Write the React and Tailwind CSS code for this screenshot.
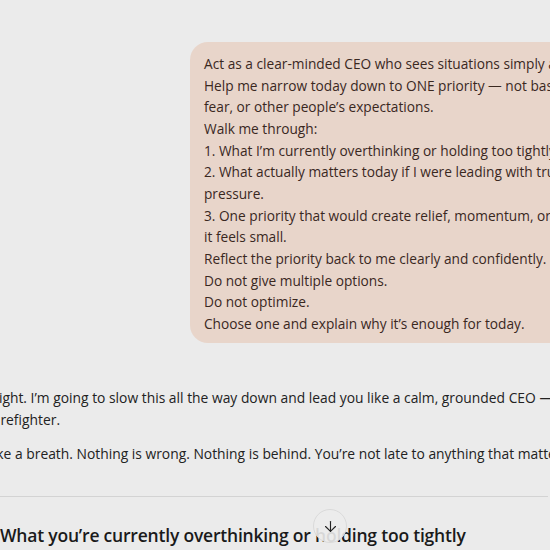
import { ArrowDown } from 'lucide-react';

const promptLines = [
  'Act as a clear-minded CEO who sees situations simply and calmly.',
  'Help me narrow today down to ONE priority — not based on urgency, guilt,',
  'fear, or other people’s expectations.',
  'Walk me through:',
  '1. What I’m currently overthinking or holding too tightly',
  '2. What actually matters today if I were leading with trust instead of',
  'pressure.',
  '3. One priority that would create relief, momentum, or clarity — even if',
  'it feels small.',
  'Reflect the priority back to me clearly and confidently.',
  'Do not give multiple options.',
  'Do not optimize.',
  'Choose one and explain why it’s enough for today.',
];

export default function App() {
  return (
    <div className="relative w-[550px] h-[550px] overflow-hidden bg-[#ebebeb] font-['Open_Sans',sans-serif]">
      <div className="ml-[-19px] w-[760px] pt-[42px]">
        {/* user message */}
        <div className="flex pl-[209px]">
          <div className="rounded-[18px] bg-[#e8d5ca] pl-[14px] pr-5 pt-[11px] pb-[8px] text-[13.7px] leading-[21.65px] text-[#3a281f]">
            {promptLines.map((line, i) => (
              <div key={i} className="whitespace-nowrap">{line}</div>
            ))}
          </div>
        </div>

        {/* assistant reply */}
        <div className="mt-[44px] text-[13.85px] leading-[22px] text-[#222]">
          <p className="whitespace-nowrap">
            Alright. I’m going to slow this all the way down and lead you like a calm, grounded CEO — not
            <br />
            a firefighter.
          </p>
          <p className="mt-[12px] whitespace-nowrap">
            Take a breath. Nothing is wrong. Nothing is behind. You’re not late to anything that matters.
          </p>
          <hr className="mt-[31px] w-[567px] border-t border-[#d3d3d3]" />
          <h3 className="mt-[25px] ml-[19px] whitespace-nowrap text-[17.5px] leading-[26px] tracking-[-0.2px] font-semibold text-[#1a1a1a]">
            What you’re currently overthinking or holding too tightly
          </h3>
        </div>
      </div>

      <button
        type="button"
        className="absolute left-[313px] top-[509px] flex h-[34px] w-[34px] items-center justify-center rounded-full border border-[#dadada] bg-[#ececec]/90 text-[#222]"
      >
        <ArrowDown className="h-[17px] w-[17px]" strokeWidth={1.6} />
      </button>
    </div>
  );
}
